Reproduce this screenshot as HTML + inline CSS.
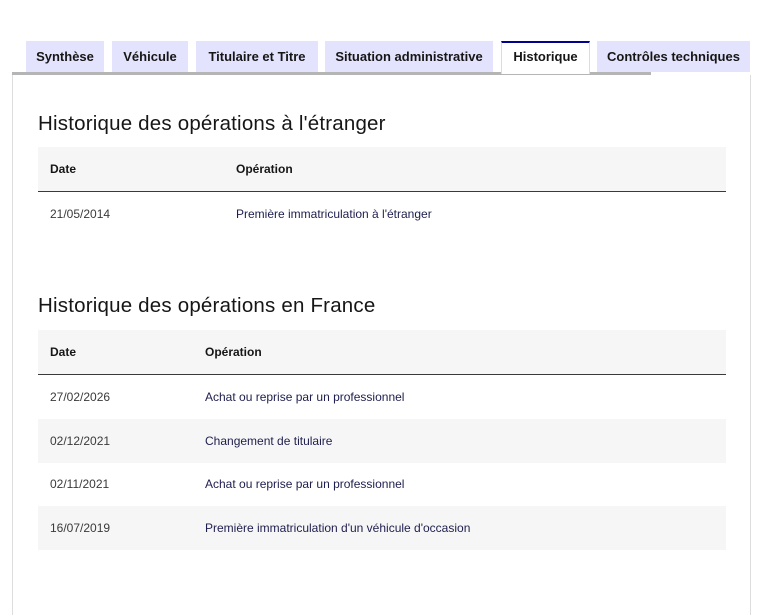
<!DOCTYPE html>
<html><head><meta charset="utf-8"><style>
*{margin:0;padding:0;box-sizing:border-box}
body{width:764px;height:600px;background:#fff;font-family:"Liberation Sans",sans-serif;color:#161616;position:relative;overflow:hidden}
.tab{position:absolute;top:41px;height:31px;background:#e3e3fd;font-size:13px;font-weight:bold;display:flex;align-items:center;justify-content:center;color:#161616}
.tab.act{background:#fff;border-top:2px solid #000091;height:33px;top:41px;border-left:1px solid #ddd;border-right:1px solid #ddd;padding-bottom:4px}
.bar{position:absolute;left:12px;top:72px;width:639px;height:3px;background:#b5b5b5}
.panel{position:absolute;left:12px;top:75px;width:739px;height:540px;border-left:1px solid #ddd;border-right:1px solid #ddd}
h2{position:absolute;left:38px;font-size:20.5px;font-weight:normal;color:#161616;letter-spacing:0.2px}
.row{position:absolute;left:38px;width:688px;height:44px;font-size:12px;color:#3a3a3a}
.row span{position:absolute;top:15px}
.hd{background:#f6f6f6;border-bottom:1px solid #3a3a3a;font-weight:bold;color:#161616}
.g{background:#f6f6f6}
.op{color:#1e1e4e}
</style></head><body>
<div class="panel"></div>
<div class="bar"></div>
<div class="tab" style="left:26px;width:78px">Synthèse</div>
<div class="tab" style="left:112px;width:76px">Véhicule</div>
<div class="tab" style="left:196px;width:122px">Titulaire et Titre</div>
<div class="tab" style="left:325px;width:168px">Situation administrative</div>
<div class="tab act" style="left:501px;width:89px">Historique</div>
<div class="tab" style="left:597px;width:153px">Contrôles techniques</div>

<h2 style="top:112px">Historique des opérations à l'étranger</h2>
<div class="row hd" style="top:147px;height:45px"><span style="left:12px">Date</span><span style="left:198px">Opération</span></div>
<div class="row" style="top:192px"><span style="left:12px">21/05/2014</span><span class="op" style="left:198px">Première immatriculation à l'étranger</span></div>

<h2 style="top:294px">Historique des opérations en France</h2>
<div class="row hd" style="top:330px;height:45px"><span style="left:12px">Date</span><span style="left:167px">Opération</span></div>
<div class="row" style="top:375px"><span style="left:12px">27/02/2026</span><span class="op" style="left:167px">Achat ou reprise par un professionnel</span></div>
<div class="row g" style="top:419px"><span style="left:12px">02/12/2021</span><span class="op" style="left:167px">Changement de titulaire</span></div>
<div class="row" style="top:462px"><span style="left:12px">02/11/2021</span><span class="op" style="left:167px">Achat ou reprise par un professionnel</span></div>
<div class="row g" style="top:506px"><span style="left:12px">16/07/2019</span><span class="op" style="left:167px">Première immatriculation d'un véhicule d'occasion</span></div>
</body></html>
